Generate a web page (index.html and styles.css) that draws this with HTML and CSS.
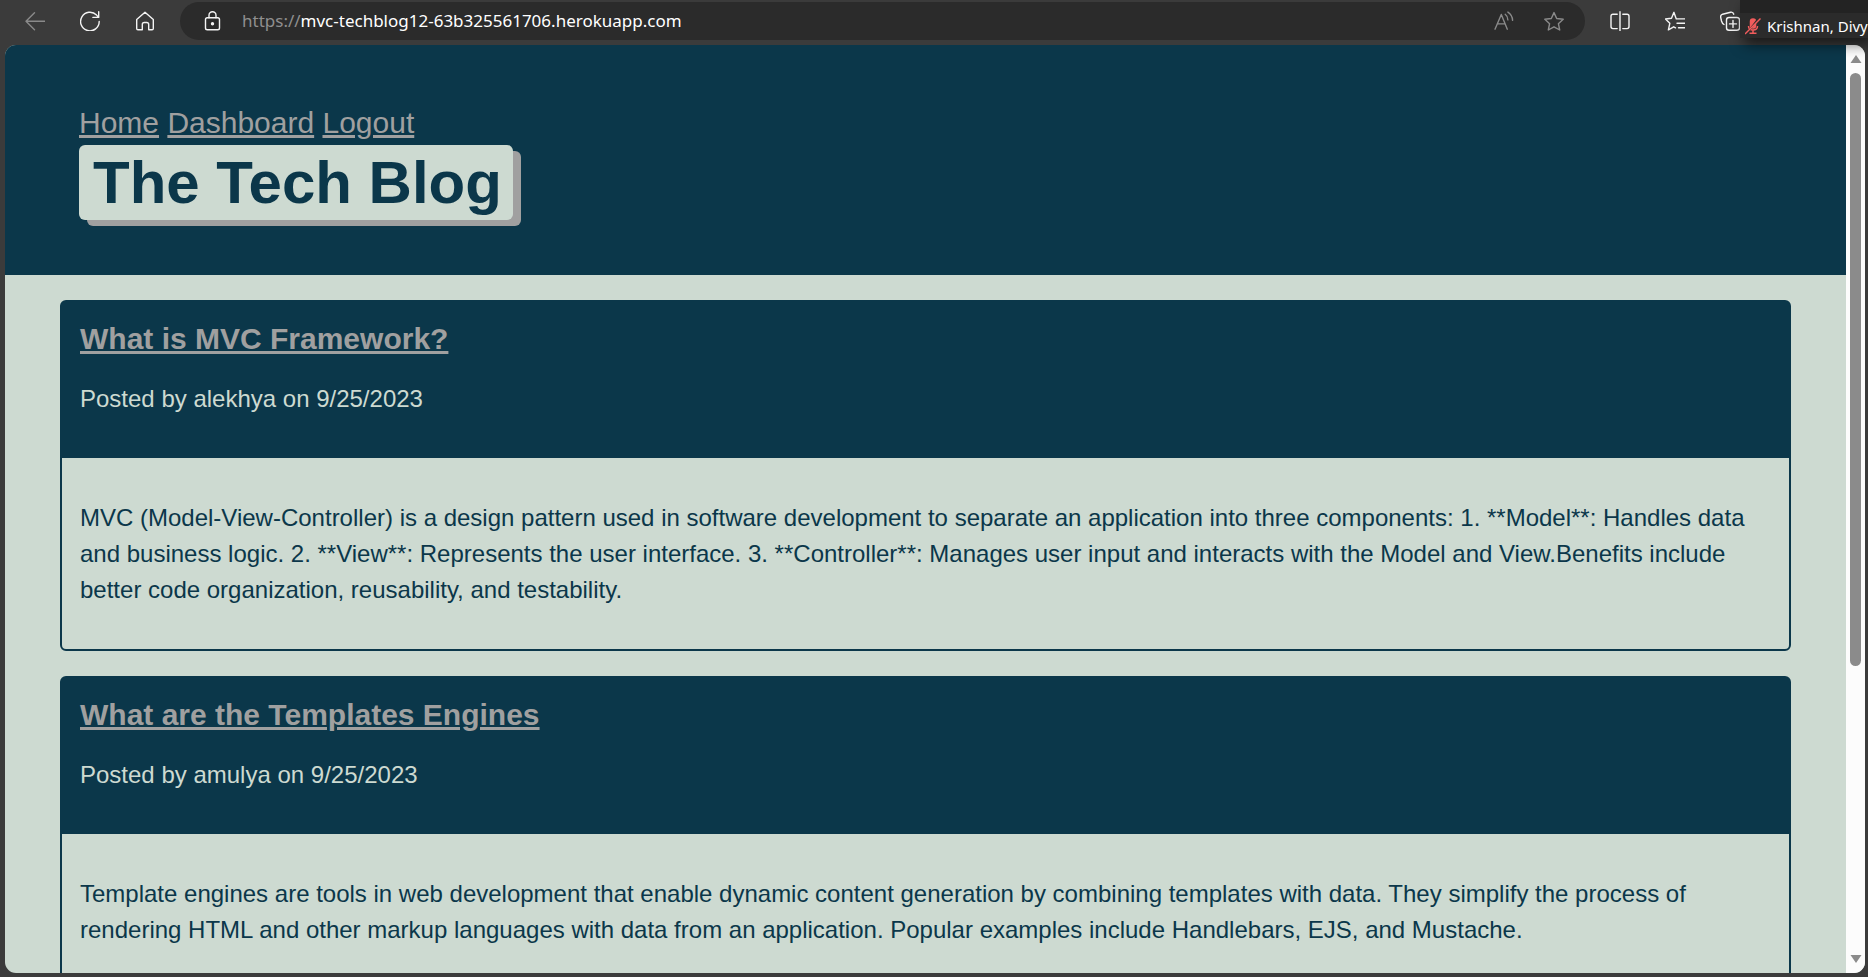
FILE: index.html
```html
<!DOCTYPE html>
<html lang="en">
<head>
<meta charset="utf-8">
<title>The Tech Blog</title>
<link rel="stylesheet" href="styles.css">
</head>
<body>
<div class="toolbar">
  <div class="nav-buttons">
    <button class="icon-btn dim" aria-label="Back"><svg viewBox="0 0 20 20"><path d="M20 10.3H1M9.5 1.8 1 10.3l8.5 8.5"/></svg></button>
    <button class="icon-btn" aria-label="Refresh"><svg viewBox="0 0 20 20"><path d="M19.2 10.5a9.3 9.3 0 1 1-2.6-6.4l2 2.2M18.7.8v5.6h-5.8"/></svg></button>
    <button class="icon-btn" aria-label="Home"><svg viewBox="0 0 20 20"><path d="M1.7 8.6 10 1.2l8.3 7.4v9q0 1.2-1.2 1.2h-3.4v-5.3q0-2-2-2H9.3q-2 0-2 2v5.3H2.9q-1.2 0-1.2-1.2z"/></svg></button>
  </div>
  <div class="omnibox">
    <button class="icon-btn" aria-label="Site information"><svg viewBox="0 0 20 20"><rect x="3.5" y="6.700" width="14" height="12.100" rx="1.800"/><path d="M7 6.700V4.200a3.500 3.500 0 0 1 7 0v2.500"/><circle class="solid" cx="10.500" cy="12.800" r="1"/></svg></button>
    <div class="address">
      <label for="address" class="scheme">https://</label>
      <input id="address" class="url" type="text" value="mvc-techblog12-63b325561706.herokuapp.com">
    </div>
    <div class="omnibox-actions">
      <button class="icon-btn dim" aria-label="Read aloud"><svg viewBox="0 0 20 20"><path d="M1 18.200 7.300 3.500l6 14.700M3.300 12.900h7.900M11.200 3.300q2.600 1.900 2.700 5.600M13.900 1.100q4.500 3 4.700 8.300"/></svg></button>
      <button class="icon-btn dim" aria-label="Add to favorites"><svg viewBox="0 0 20 20"><path d="m10 1.600 2.700 5.900 6.500.8-4.800 4.400 1.300 6.300-5.700-3.200L4.300 19l1.300-6.300L.8 8.300l6.500-.8z"/></svg></button>
    </div>
  </div>
  <div class="tool-buttons">
    <button class="icon-btn" aria-label="Split screen"><svg viewBox="0 0 20 20"><path d="M10 .8v19M7.200 3.200H3Q1 3.200 1 5.200v10.400q0 2 2 2h4.200M12.800 3.200H17q2 0 2 2v10.400q0 2-2 2h-4.200"/></svg></button>
    <button class="icon-btn" aria-label="Favorites"><svg viewBox="0 0 20 20"><path d="M13 7.900h-1.700L8.900 1.300 6.500 7.200.4 8l4.400 4.300-1.400 6.600 5.300-3.100 1.800 1M13.500 7.900H20M12 12.300h8M13.500 16.700H20"/></svg></button>
    <button class="icon-btn" aria-label="Collections"><svg viewBox="0 0 20 20"><rect x="6.500" y="6.500" width="13" height="12.800" rx="2.500"/><path d="M13 9.400v7M9.500 12.900h7M4 13.500Q2.200 12.500 1.500 10L.7 6.300Q.3 3.900 2.600 3.200l8-2q2.500-.5 3.200 2"/></svg></button>
  </div>
  <div class="speaker">
    <svg class="mic" viewBox="0 0 16 18"><rect x="5.500" y="2" width="5" height="9" rx="2.500"/><path d="M3.500 9q0 4 4.500 4t4.500-4M8 13v3M4.500 16.200h7"/><path class="gap" d="M1 17.500 14 .5"/><path d="M0 17 15.500 1.500"/></svg>
    <span>Krishnan, Divy</span>
  </div>
</div>

<div class="window">
  <div class="page">
    <header class="site-header">
      <nav class="site-nav">
        <a href="#home">Home</a>
        <a href="#dashboard">Dashboard</a>
        <a href="#logout">Logout</a>
      </nav>
      <h1 class="site-title">The Tech Blog</h1>
    </header>
    <main class="posts">
      <article class="card">
        <header class="card-header">
          <h2><a href="#mvc">What is MVC Framework?</a></h2>
          <p>Posted by alekhya on 9/25/2023</p>
        </header>
        <div class="card-body">
          <p>MVC (Model-View-Controller) is a design pattern used in software development to separate an application into three components: 1. **Model**: Handles data and business logic. 2. **View**: Represents the user interface. 3. **Controller**: Manages user input and interacts with the Model and View.Benefits include better code organization, reusability, and testability.</p>
        </div>
      </article>
      <article class="card">
        <header class="card-header">
          <h2><a href="#templates">What are the Templates Engines</a></h2>
          <p>Posted by amulya on 9/25/2023</p>
        </header>
        <div class="card-body">
          <p>Template engines are tools in web development that enable dynamic content generation by combining templates with data. They simplify the process of rendering HTML and other markup languages with data from an application. Popular examples include Handlebars, EJS, and Mustache.</p>
        </div>
      </article>
    </main>
  </div>
  <div class="scrollbar" aria-hidden="true">
    <svg class="arrow" viewBox="0 0 12 8"><path d="M.5 8 6 0l5.500 8z"/></svg>
    <div class="track"><div class="thumb"></div></div>
    <svg class="arrow" viewBox="0 0 12 8"><path d="M.5 0 6 8l5.500-8z"/></svg>
  </div>
</div>
</body>
</html>
```
FILE: styles.css
```css
:root {
  --navy: #0b374a;
  --sage: #cddad1;
  --gray: #a0a0a0;
  --chrome: #3b3b3b;
  --field: #2b2b2b;
}

* {
  box-sizing: border-box;
}

body {
  margin: 0;
  height: 100vh;
  display: flex;
  flex-direction: column;
  overflow: hidden;
  background: var(--chrome);
  font-family: "Liberation Sans", Arial, sans-serif;
  font-size: 24px;
  line-height: 36px;
  color: var(--navy);
}

/* Browser toolbar */
.toolbar {
  flex: none;
  display: flex;
  align-items: center;
  gap: 25px;
  padding: 2px 128px 5px 25px;
  font-family: "Noto Sans", "Open Sans", sans-serif;
  font-size: 17px;
  line-height: 24px;
}

.nav-buttons,
.tool-buttons {
  display: flex;
  gap: 35px;
}

.icon-btn {
  display: flex;
  width: 20px;
  height: 20px;
  padding: 0;
  border: 0;
  background: none;
  color: #f4f4f4;
}

.icon-btn.dim {
  color: #8a8a8a;
}

.icon-btn svg {
  width: 20px;
  height: 20px;
  fill: none;
  stroke: currentColor;
  stroke-width: 1.4;
  stroke-linecap: round;
  stroke-linejoin: round;
}

.icon-btn .solid {
  fill: currentColor;
}

.omnibox {
  flex: 1;
  display: flex;
  align-items: center;
  gap: 20px;
  height: 38px;
  padding: 0 21px 0 22px;
  border-radius: 19px;
  background: var(--field);
}

.address {
  flex: 1;
  display: flex;
  align-items: center;
}

.scheme {
  color: #8f8f8f;
}

.url {
  flex: 1;
  padding: 0;
  border: 0;
  outline: 0;
  background: none;
  font: inherit;
  color: #fff;
}

.omnibox-actions {
  display: flex;
  gap: 30px;
}

/* Meeting caption over the window corner */
.speaker {
  position: absolute;
  z-index: 2;
  top: 0;
  right: 0;
  width: 128px;
  height: 38px;
  display: flex;
  align-items: center;
  gap: 6px;
  padding: 13px 0 0 5px;
  overflow: hidden;
  white-space: nowrap;
  font-size: 15px;
  color: #fff;
  background: linear-gradient(#232323 13px, var(--field) 13px);
  box-shadow: 4px 6px 14px rgba(0, 0, 0, 0.6);
}

.mic {
  flex: none;
  width: 16px;
  height: 18px;
  fill: none;
  stroke: #f25c5c;
  stroke-width: 1.5;
}

.mic rect {
  fill: #f25c5c;
}

.mic .gap {
  stroke: var(--field);
}

/* Page area */
.window {
  flex: 1;
  min-height: 0;
  display: flex;
  margin: 0 3px 4px 5px;
  border-radius: 11px;
  overflow: hidden;
  background: var(--sage);
}

.page {
  flex: 1;
  overflow: hidden;
}

.site-header {
  padding: 55px 74px;
  background: var(--navy);
}

.site-nav {
  font-size: 30px;
  line-height: 45px;
}

a {
  color: var(--gray);
}

.site-title {
  width: fit-content;
  margin: 0;
  padding: 0 11px 0 14px;
  border-radius: 6px;
  background: var(--sage);
  box-shadow: 8px 6px 0 var(--gray);
  font-size: 60px;
  line-height: 75px;
}

.posts {
  display: flex;
  flex-direction: column;
  gap: 25px;
  padding: 25px 55px;
}

.card {
  border: 2px solid var(--navy);
  border-radius: 6px;
}

.card-header {
  padding: 19px 18px 17px;
  background: var(--navy);
  color: var(--sage);
}

.card-body {
  padding: 18px 18px 17px;
}

.card h2 {
  margin: 0;
  font-size: 30px;
  line-height: 36px;
}

.card p {
  margin: 24px 0;
}

.scrollbar {
  width: 19px;
  display: flex;
  flex-direction: column;
  align-items: center;
  gap: 10px;
  padding: 10px 0;
  background: #fcfcfc;
}

.arrow {
  width: 12px;
  height: 8px;
  fill: #8b8b8b;
}

.track {
  flex: 1;
}

.thumb {
  width: 11px;
  height: 68%;
  border-radius: 6px;
  background: #8b8b8b;
}
```
